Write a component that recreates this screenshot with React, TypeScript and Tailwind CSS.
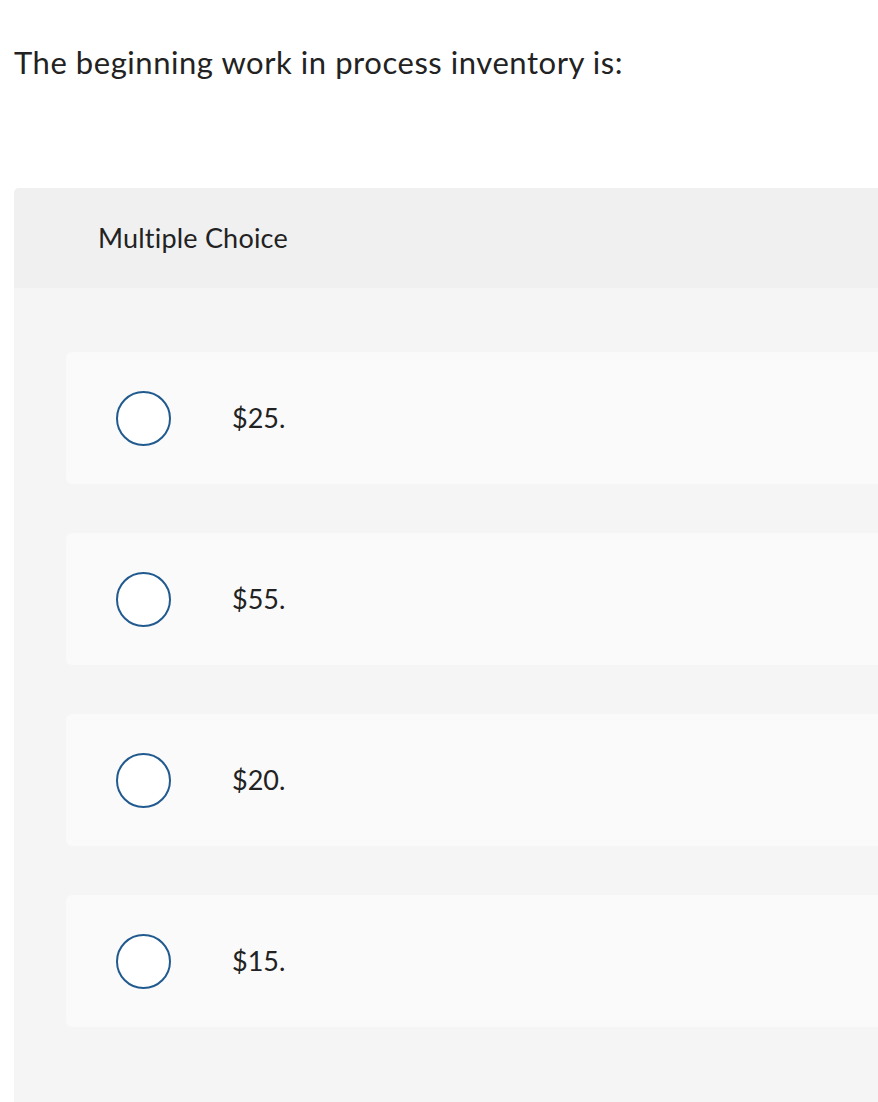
import React from "react";

const options = ["$25.", "$55.", "$20.", "$15."];

export default function App() {
  return (
    <div className="min-h-[1102px] bg-white font-['Lato','Noto_Sans',sans-serif] text-[#222]">
      <h1 className="pl-[14px] pt-[42px] text-[31px] leading-[40px] tracking-[0.55px]">
        The beginning work in process inventory is:
      </h1>

      <div className="ml-[14px] mt-[106px] overflow-hidden rounded-tl-[5px] bg-[#f5f5f5] pb-[80px]">
        <div className="flex h-[100px] items-center bg-[#f0f0f0] pl-[84px] text-[27px] tracking-[0.2px]">
          Multiple Choice
        </div>

        <div className="flex flex-col gap-[49px] pl-[52px] pt-[64px]">
          {options.map((opt) => (
            <div
              key={opt}
              className="flex h-[132px] items-center rounded-l-[6px] bg-[#fafafa] pl-[50px]"
            >
              <span className="h-[55px] w-[55px] shrink-0 rounded-full border-2 border-[#215a8f] bg-white" />
              <span className="ml-[61px] text-[27px]">{opt}</span>
            </div>
          ))}
        </div>
      </div>
    </div>
  );
}
